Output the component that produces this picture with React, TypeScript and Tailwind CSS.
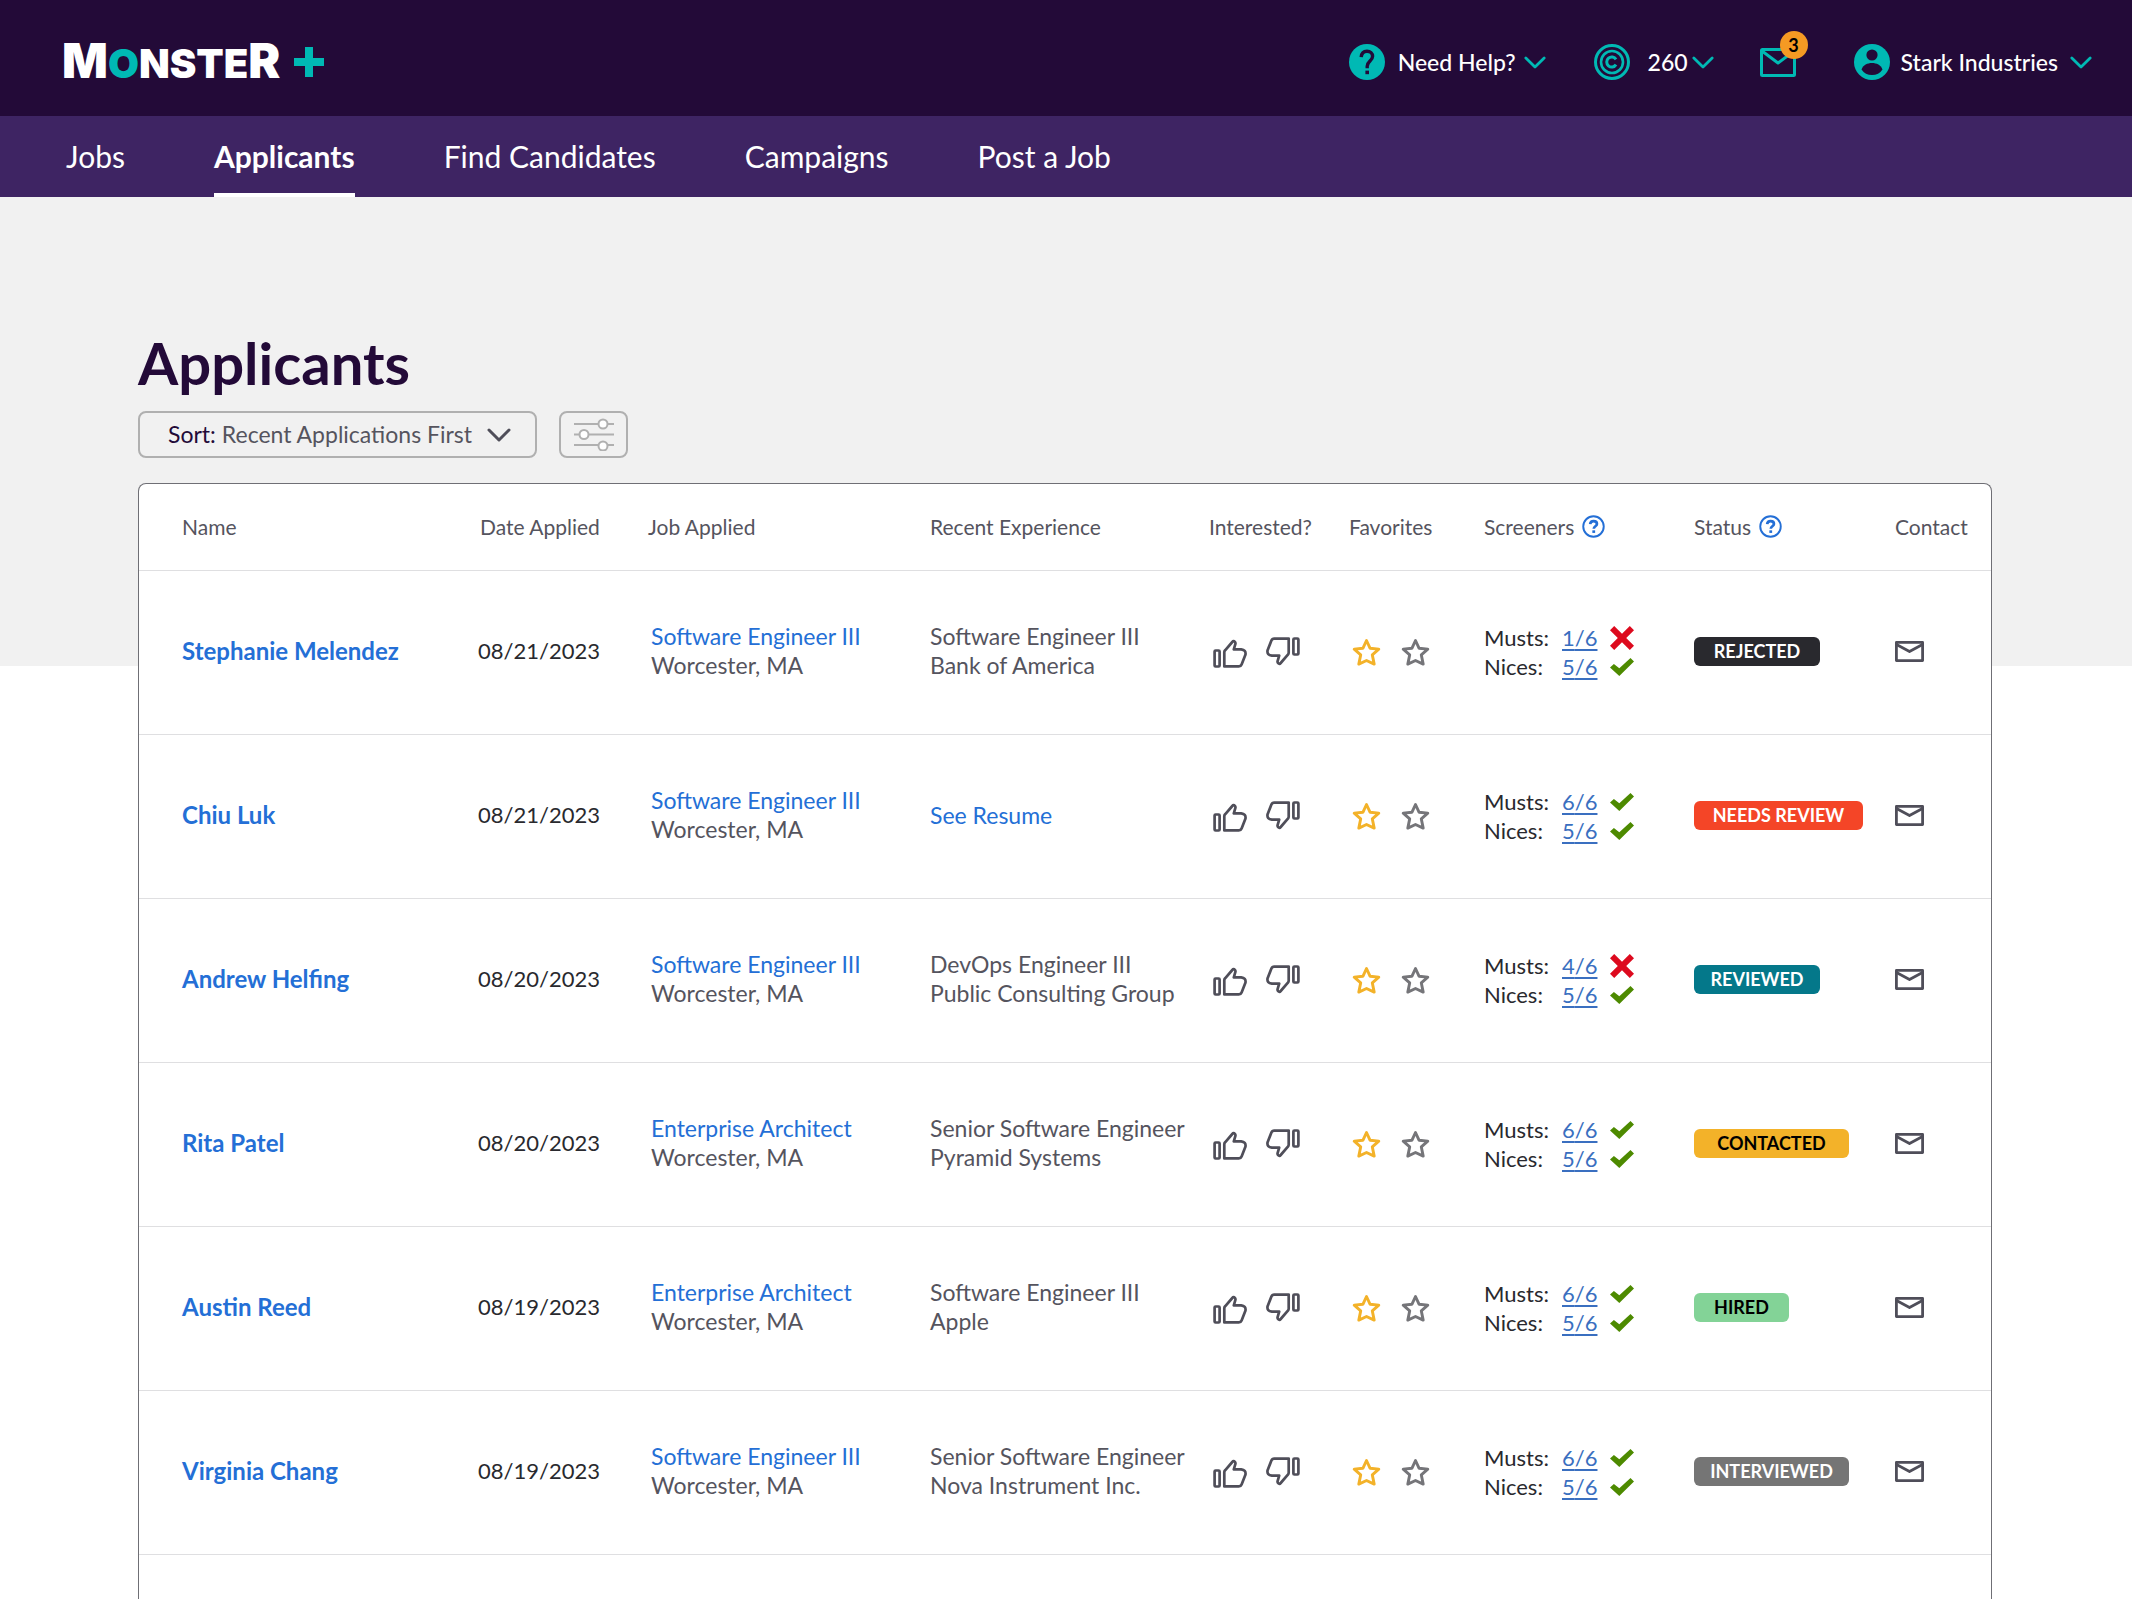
import React from 'react';

type Applicant = {
  name: string;
  date: string;
  job: string;
  experience: string[];
  musts: number;
  status: string;
};

const applicants: Applicant[] = [
  { name: 'Stephanie Melendez', date: '08/21/2023', job: 'Software Engineer III', experience: ['Software Engineer III', 'Bank of America'], musts: 1, status: 'REJECTED' },
  { name: 'Chiu Luk', date: '08/21/2023', job: 'Software Engineer III', experience: [], musts: 6, status: 'NEEDS REVIEW' },
  { name: 'Andrew Helfing', date: '08/20/2023', job: 'Software Engineer III', experience: ['DevOps Engineer III', 'Public Consulting Group'], musts: 4, status: 'REVIEWED' },
  { name: 'Rita Patel', date: '08/20/2023', job: 'Enterprise Architect', experience: ['Senior Software Engineer', 'Pyramid Systems'], musts: 6, status: 'CONTACTED' },
  { name: 'Austin Reed', date: '08/19/2023', job: 'Enterprise Architect', experience: ['Software Engineer III', 'Apple'], musts: 6, status: 'HIRED' },
  { name: 'Virginia Chang', date: '08/19/2023', job: 'Software Engineer III', experience: ['Senior Software Engineer', 'Nova Instrument Inc.'], musts: 6, status: 'INTERVIEWED' },
];

const statusStyles: Record<string, string> = {
  REJECTED: 'w-[126px] bg-[#29292e] text-white',
  'NEEDS REVIEW': 'w-[169px] bg-[#f44527] text-white',
  REVIEWED: 'w-[126px] bg-[#04788a] text-white',
  CONTACTED: 'w-[155px] bg-[#f3b229] text-black',
  HIRED: 'w-[95px] bg-[#83d397] text-black',
  INTERVIEWED: 'w-[155px] bg-[#757575] text-white',
};

const Chevron = ({ className }: { className: string }) => (
  <svg viewBox="0 0 24 14" className={className} fill="none" stroke="currentColor" strokeLinecap="round" strokeLinejoin="round">
    <path d="M2 2l10 10L22 2" />
  </svg>
);

const HelpSolid = () => (
  <svg viewBox="0 0 36 36" className="size-9 text-[#00b9b4]">
    <circle cx="18" cy="18" r="18" fill="currentColor" />
    <path d="M12.2 13.200c.3-4 2.600-6 5.800-6 3.400 0 5.600 2.200 5.600 5.100 0 4.700-5.400 4.900-5.400 10v2" fill="none" stroke="#230a38" strokeWidth="3.400" />
    <rect x="16.400" y="26.600" width="3.600" height="3.600" fill="#230a38" />
  </svg>
);

const CreditIcon = () => (
  <svg viewBox="0 0 36 36" className="size-9 text-[#00b9b4]" fill="none" stroke="currentColor">
    <circle cx="18" cy="18" r="16.500" strokeWidth="3" />
    <circle cx="18" cy="18" r="11" strokeWidth="2.600" />
    <path d="M22 15.400a5 5 0 1 0 0 5.200" strokeWidth="3" />
  </svg>
);

const UserIcon = () => (
  <svg viewBox="0 0 36 36" className="size-9">
    <circle cx="18" cy="18" r="18" fill="#00b9b4" />
    <circle cx="18" cy="11" r="5.600" fill="#230a38" />
    <path d="M7.500 25.500C9 21 13.500 19 18 19s9 2 10.500 6.500C26 29.200 22.500 31 18 31s-8-1.800-10.500-5.500z" fill="#230a38" />
  </svg>
);

const HelpOutline = () => (
  <svg viewBox="0 0 24 24" className="size-[23px] text-[#246fd6]" fill="none" stroke="currentColor">
    <circle cx="12" cy="12" r="10.700" strokeWidth="2" />
    <path d="M8.500 9.600c.2-2.100 1.500-3.300 3.600-3.300s3.500 1.200 3.500 3c0 2.500-3.300 2.500-3.300 5.100" strokeWidth="2.800" />
    <rect x="10.800" y="16" width="2.900" height="2.700" fill="currentColor" stroke="none" />
  </svg>
);

const Thumb = ({ down = false }: { down?: boolean }) => (
  <svg viewBox="0 0 34 29" className={down ? 'w-[34px] h-[29px] rotate-180' : 'w-[34px] h-[29px]'} fill="none" stroke="#4f4e59" strokeWidth="2.700" strokeLinejoin="round">
    <rect x="1.600" y="11.500" width="5" height="16" rx="1" />
    <path d="M11.300 27.400V13.300q0-1.200.8-2L19.300 3q1.300-1.500 2.500-.2.900.9.600 2L20.800 10.400h7.400q4.900.6 4.300 5l-3.900 10q-.8 2-2.800 2z" />
  </svg>
);

const Star = ({ className }: { className: string }) => (
  <svg viewBox="0 0 29 29" className={className} fill="none" stroke="currentColor" strokeWidth="2.900" strokeLinejoin="round">
    <path d="M14.500 2.500l3.500 7.700 8.800.9-6.500 5.800 1.900 9.200-7.700-3.600-7.700 3.600 1.900-9.200-6.500-5.800 8.800-.9z" />
  </svg>
);

const Check = () => (
  <svg viewBox="0 0 24 18" className="w-6 h-[18px]">
    <path d="M0 9.600L3.900 6l5.400 4.200L20.500 0 24 3.600 9.300 18z" fill="#4d8a00" />
  </svg>
);

const Cross = () => (
  <svg viewBox="0 0 24 24" className="size-6">
    <path d="M0 4.200L4.200 0 12 7.800 19.800 0 24 4.200 16.200 12l7.800 7.800-4.200 4.200L12 16.200 4.200 24 0 19.800 7.800 12z" fill="#dd0a1e" />
  </svg>
);

const Envelope = () => (
  <svg viewBox="0 0 29 21" className="w-[29px] h-[21px]" fill="none" stroke="#4f4e59" strokeWidth="2.800" strokeLinejoin="round">
    <rect x="1.400" y="1.400" width="26.200" height="18.200" />
    <path d="M1.500 3.500l13 7 13-7" />
  </svg>
);

const Score = ({ label, value }: { label: string; value: number }) => (
  <div className="flex items-center">
    <span className="w-[78px]">{label}:</span>
    <span className="w-12">
      <a href="#screeners" className="text-[#3a6fc0] underline decoration-2 underline-offset-[3px]">{value}/6</a>
    </span>
    {value > 4 ? <Check /> : <Cross />}
  </div>
);

const App: React.FC = () => {
  return (
    <div className="min-h-screen flex flex-col bg-white font-[Lato,sans-serif] text-[23px] leading-[29px]">
      <header className="h-[116px] bg-[#230a38] pl-[62px] pr-10 pt-2 flex items-center justify-between text-white">
        <a href="#home" className="flex items-center gap-[14px]">
          <span className="font-[Inter,sans-serif] text-[40px] leading-[50px] font-black">
            <span className="text-[48px]">M</span>
            <span className="text-[#00b9b4]">O</span>NSTE
            <span className="text-[48px]">R</span>
          </span>
          <svg viewBox="0 0 30 30" className="size-[30px] text-[#00b9b4]" fill="currentColor">
            <path d="M11 0h8v11h11v8H19v11h-8V19H0v-8h11z" />
          </svg>
        </a>

        <div className="flex items-center font-medium">
          <button className="flex items-center mr-12">
            <HelpSolid />
            <span className="ml-[13px] mr-2">Need Help?</span>
            <Chevron className="w-[22px] h-[13px] text-[#00b9b4] stroke-3" />
          </button>
          <button className="flex items-center mr-[46px]">
            <CreditIcon />
            <span className="ml-[18px] mr-1">260</span>
            <Chevron className="w-[22px] h-[13px] text-[#00b9b4] stroke-3" />
          </button>
          <button className="relative mr-[58px]" aria-label="Messages">
            <svg viewBox="0 0 36 29" className="w-9 h-[29px]" fill="none" stroke="#00b9b4" strokeWidth="3" strokeLinejoin="round">
              <rect x="1.500" y="1.500" width="33" height="26" rx="1" />
              <path d="M2 3l16 12L34 3" />
            </svg>
            <span className="absolute -top-[17px] left-5 size-7 rounded-full bg-[#f59a23] text-black text-lg leading-7 font-bold text-center">3</span>
          </button>
          <button className="flex items-center">
            <UserIcon />
            <span className="ml-[11px] mr-3">Stark Industries</span>
            <Chevron className="w-[22px] h-[13px] text-[#00b9b4] stroke-3" />
          </button>
        </div>
      </header>

      <nav className="h-[81px] bg-[#3e2463] pl-[66px] flex gap-[89px] text-[30px] text-white">
        <a href="#jobs" className="flex items-center border-y-4 border-transparent">Jobs</a>
        <a href="#applicants" className="flex items-center border-y-4 border-t-transparent border-b-white font-bold">Applicants</a>
        <a href="#find" className="flex items-center border-y-4 border-transparent">Find Candidates</a>
        <a href="#campaigns" className="flex items-center border-y-4 border-transparent">Campaigns</a>
        <a href="#post" className="flex items-center border-y-4 border-transparent">Post a Job</a>
      </nav>

      <main className="flex-1 flex flex-col pl-[138px] pr-[140px] pt-[131px] bg-[linear-gradient(#f1f1f1_469px,#ffffff_469px)]">
        <h1 className="text-[58px] leading-[70px] font-bold text-[#230a38]">Applicants</h1>

        <div className="flex gap-[22px] mt-[13px]">
          <label className="h-[47px] w-[399px] pl-7 pr-6 flex items-center border-2 border-[#b0b0b0] rounded-lg">
            <span className="text-[#230a38] mr-[6px]">Sort:</span>
            <select className="appearance-none bg-transparent text-[#55545e] flex-1">
              <option>Recent Applications First</option>
            </select>
            <Chevron className="w-6 h-[14px] text-[#4f4e59] stroke-3" />
          </label>
          <button className="h-[47px] w-[69px] flex items-center justify-center border-2 border-[#b0b0b0] rounded-lg" aria-label="Filters">
            <svg viewBox="0 0 40 33" className="w-10 h-[33px]" fill="white" stroke="#b0b0b0" strokeWidth="2">
              <path d="M0 6h40M0 16.500h40M0 27h40" />
              <circle cx="29" cy="6" r="4.500" />
              <circle cx="10" cy="16.500" r="4.500" />
              <circle cx="29" cy="28" r="4.500" />
            </svg>
          </button>
        </div>

        <div className="flex-1 mt-[25px] bg-white border border-b-0 border-[#6f6f75] rounded-t-lg">
          <table className="w-full table-fixed text-left">
            <colgroup>
              <col className="w-[339px]" />
              <col className="w-[170px]" />
              <col className="w-[282px]" />
              <col className="w-[279px]" />
              <col className="w-[140px]" />
              <col className="w-[135px]" />
              <col className="w-[210px]" />
              <col className="w-[201px]" />
              <col className="w-[96px]" />
            </colgroup>
            <thead>
              <tr className="h-[86px] border-b border-[#dfdfe1] text-[21px] whitespace-nowrap text-[#55545e]">
                <th className="pl-[43px] font-normal">Name</th>
                <th className="pl-[2px] font-normal">Date Applied</th>
                <th className="font-normal">Job Applied</th>
                <th className="font-normal">Recent Experience</th>
                <th className="font-normal">Interested?</th>
                <th className="font-normal">Favorites</th>
                <th className="font-normal">
                  <span className="flex items-center gap-2">Screeners <HelpOutline /></span>
                </th>
                <th className="font-normal">
                  <span className="flex items-center gap-2">Status <HelpOutline /></span>
                </th>
                <th className="font-normal">Contact</th>
              </tr>
            </thead>
            <tbody>
              {applicants.map((applicant) => (
                <tr key={applicant.name} className="h-[164px] border-b border-[#dfdfe1] whitespace-nowrap text-[#55545e]">
                  <td className="pl-[43px] pb-[2px]">
                    <a href="#profile" className="text-2xl font-bold text-[#246fd6]">{applicant.name}</a>
                  </td>
                  <td className="pb-1 text-[22px] text-[#29292e]">{applicant.date}</td>
                  <td className="pl-[3px] pb-[2px]">
                    <a href="#job" className="block text-[#246fd6]">{applicant.job}</a>
                    Worcester, MA
                  </td>
                  <td className="pb-[2px]">
                    {applicant.experience.length > 0 ? (
                      applicant.experience.map((line) => <div key={line}>{line}</div>)
                    ) : (
                      <a href="#resume" className="text-[#246fd6]">See Resume</a>
                    )}
                  </td>
                  <td>
                    <div className="flex pl-1 gap-[19px]">
                      <button className="pt-[2px]" aria-label="Interested"><Thumb /></button>
                      <button className="pb-[2px]" aria-label="Not interested"><Thumb down /></button>
                    </div>
                  </td>
                  <td>
                    <div className="flex pl-[3px] gap-5">
                      <button aria-label="Favorite"><Star className="size-[29px] text-[#f3b229]" /></button>
                      <button aria-label="Unfavorite"><Star className="size-[29px] text-[#757579]" /></button>
                    </div>
                  </td>
                  <td className="text-[22px] text-[#29292e]">
                    <Score label="Musts" value={applicant.musts} />
                    <Score label="Nices" value={5} />
                  </td>
                  <td className="pb-[2px]">
                    <span className={`block h-[29px] rounded-md text-center text-lg leading-[29px] font-bold ${statusStyles[applicant.status]}`}>
                      {applicant.status}
                    </span>
                  </td>
                  <td className="pb-[2px]">
                    <button className="block" aria-label="Contact"><Envelope /></button>
                  </td>
                </tr>
              ))}
            </tbody>
          </table>
        </div>
      </main>
    </div>
  );
};

export default App;
